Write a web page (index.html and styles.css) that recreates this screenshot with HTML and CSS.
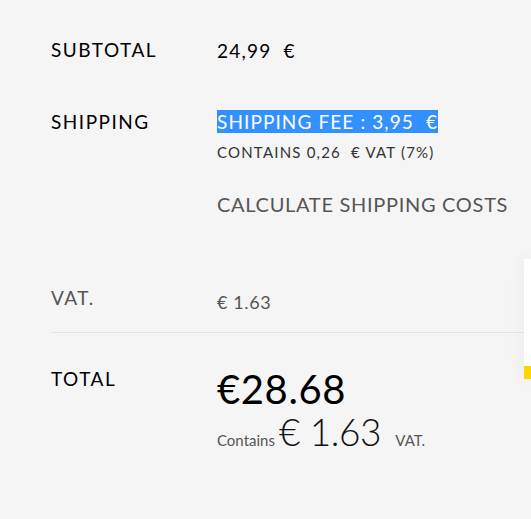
FILE: index.html
```html
<!DOCTYPE html>
<html lang="en">
<head>
<meta charset="utf-8">
<title>Cart totals</title>
<link rel="stylesheet" href="styles.css">
</head>
<body>
<div class="summary">
  <div class="row row-subtotal">
    <div class="label">SUBTOTAL</div>
    <div class="value amount">24,99&nbsp;&nbsp;€</div>
  </div>
  <div class="row row-shipping">
    <div class="label">SHIPPING</div>
    <div class="value">
      <div class="fee"><span class="selected">SHIPPING FEE : 3,95&nbsp;&nbsp;€</span></div>
      <div class="fee-vat">CONTAINS 0,26&nbsp;&nbsp;€ VAT (7%)</div>
      <div class="calc">CALCULATE SHIPPING COSTS</div>
    </div>
  </div>
  <div class="row row-vat">
    <div class="label muted">VAT.</div>
    <div class="value vat-amount">€ 1.63</div>
  </div>
  <div class="divider"></div>
  <div class="row row-total">
    <div class="label">TOTAL</div>
    <div class="value">
      <div class="grand">€28.68</div>
      <div class="incl"><span class="small">Contains</span> <span class="big">€ 1.63</span> <span class="small vat-suffix">VAT.</span></div>
    </div>
  </div>
</div>
<div class="side-card"><div class="side-bar"></div></div>
</body>
</html>
```
FILE: styles.css
```css
html, body {
  margin: 0;
  padding: 0;
}
body {
  background: #f5f5f5;
  font-family: "Lato", "Liberation Sans", sans-serif;
  color: #111;
  width: 531px;
  height: 519px;
  overflow: hidden;
  position: relative;
}
.summary {
  padding: 38px 0 0 51px;
}
.row {
  display: grid;
  grid-template-columns: 166px 1fr;
}
.label {
  font-size: 19px;
  line-height: 24px;
  letter-spacing: 1.5px;
  color: #000;
}
.label.muted {
  color: #555;
}
.amount {
  font-size: 19px;
  line-height: 24px;
  letter-spacing: 1.2px;
  color: #000;
  padding-top: 1px;
}
.row-shipping {
  margin-top: 47px;
}
.fee {
  font-size: 19px;
  line-height: 24px;
  letter-spacing: 1.1px;
}
.selected {
  background: #3390ff;
  color: #fff;
}
.fee-vat {
  margin-top: 8px;
  font-size: 15px;
  line-height: 20px;
  letter-spacing: 1.2px;
  color: #333;
}
.calc {
  margin-top: 30px;
  font-size: 20px;
  line-height: 24px;
  letter-spacing: 0.7px;
  color: #555;
}
.row-vat {
  margin-top: 70px;
}
.vat-amount {
  font-size: 18px;
  line-height: 24px;
  padding-top: 4px;
  color: #555;
  letter-spacing: 0.6px;
}
.divider {
  margin-top: 18px;
  height: 1px;
  background: #e4e4e4;
}
.row-total {
  margin-top: 34px;
}
.grand {
  font-size: 40px;
  line-height: 44px;
  letter-spacing: 0.6px;
  color: #000;
}
.incl {
  margin-top: 1px;
  line-height: 40px;
}
.small {
  font-size: 15px;
  color: #555;
}
.big {
  font-size: 37px;
  font-weight: 300;
  color: #111;
  letter-spacing: -0.4px;
}
.vat-suffix {
  margin-left: 10px;
}
.side-card {
  position: absolute;
  left: 524px;
  top: 259px;
  width: 7px;
  height: 120px;
  background: #fff;
  box-shadow: 0 0 18px rgba(0, 0, 0, 0.07);
  display: flex;
  flex-direction: column;
  justify-content: flex-end;
}
.side-bar {
  height: 13px;
  background: #fdd600;
}
```
